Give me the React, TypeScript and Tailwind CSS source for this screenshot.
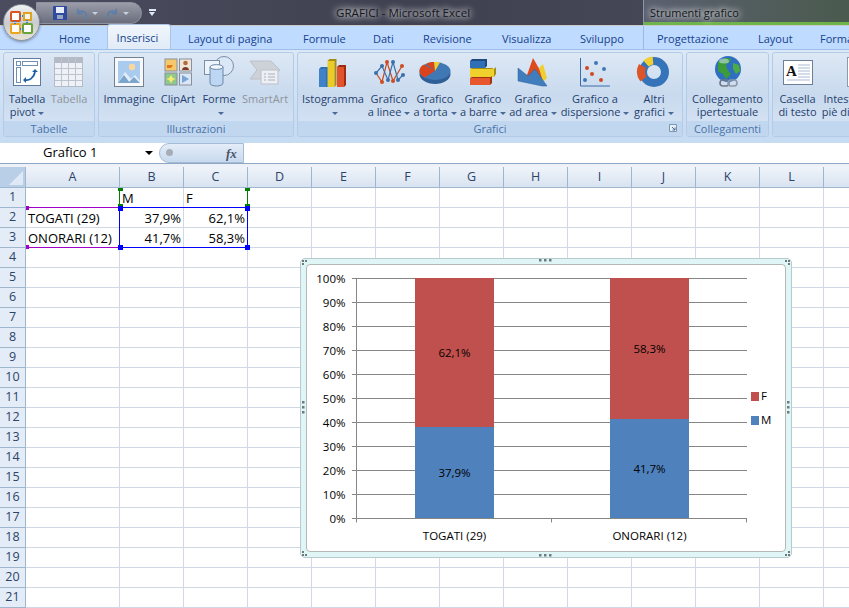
import React from "react";

const Caret = ({ c = "border-t-[#4a6a96]" }: { c?: string }) => (
  <span className={`inline-block w-0 h-0 border-x-[3px] border-t-[3px] border-x-transparent ${c} align-middle ml-[3px]`} />
);

const I = ({ children }: { children: React.ReactNode }) => (
  <svg width="36" height="36" viewBox="0 0 36 36" className="block">{children}</svg>
);

const PivotIcon = () => (
  <I>
    <rect x="4.5" y="4.5" width="27" height="27" fill="#fff" stroke="#5f7c9e" />
    <rect x="7.5" y="7.5" width="4" height="4" fill="#fff" stroke="#6f8fb5" />
    <rect x="13.5" y="7.5" width="15" height="4" fill="#fff" stroke="#6f8fb5" />
    <rect x="7.5" y="13.5" width="4" height="15" fill="#fff" stroke="#6f8fb5" />
    <path d="M16 26c4 1 9-2 10-8" fill="none" stroke="#1f5fa8" strokeWidth="1.8" />
    <path d="M23 18l3-3 3 3zM17 23l-3 3 3 3z" fill="#1f5fa8" />
  </I>
);
const TableIcon = () => (
  <I>
    <rect x="3.5" y="3.5" width="28" height="29" fill="#eef2f8" stroke="#b5bcc6" />
    <rect x="4" y="4" width="27" height="5" fill="#b4bbc6" />
    <path d="M10.5 4v28M17.5 4v28M24.5 4v28M4 14.5h27M4 20.5h27M4 26.5h27" stroke="#bcc3cd" />
  </I>
);
const ImageIcon = () => (
  <I>
    <rect x="3.5" y="3.5" width="29" height="29" fill="#f6f8fb" stroke="#74818f" />
    <rect x="7" y="7" width="22" height="22" fill="#a9cbed" />
    <circle cx="21" cy="13" r="3.2" fill="#fbd7a0" />
    <path d="M7 29l7-11 6 7 4-4 5 6v2z" fill="#e4eef8" />
    <path d="M7 29l6-8 6 8zM17 29l6-6 6 6z" fill="#7da5cc" />
  </I>
);
const ClipIcon = () => (
  <I>
    <rect x="5" y="5" width="12" height="12" fill="#f4c96b" stroke="#8a8f99" />
    <path d="M7 11h6l-2 3H7z" fill="#e2761c" />
    <rect x="19.5" y="5" width="12" height="12" fill="#efe6da" stroke="#8a8f99" />
    <circle cx="25.5" cy="9" r="2.3" fill="#b26a3f" />
    <path d="M22 16c0-4 7-4 7 0z" fill="#7b3a2a" />
    <rect x="5" y="19" width="12" height="12" fill="#8fc78d" stroke="#8a8f99" />
    <path d="M11 21l2 3 3 1-3 1-2 3-2-3-3-1 3-1z" fill="#f5ec6f" />
    <rect x="19.5" y="19" width="12" height="12" fill="#d9e7f6" stroke="#8a8f99" />
    <path d="M22 21l7 4-7 4z" fill="#7aa3d6" />
  </I>
);
const ShapesIcon = () => (
  <I>
    <circle cx="23" cy="12" r="9.5" fill="#d9e7f7" stroke="#7b8ea6" />
    <rect x="3.5" y="6.5" width="15" height="14" fill="#eef4fb" stroke="#7b8ea6" />
    <path d="M9 13v16c0 4 13 4 13 0V13z" fill="#bcd6f4" stroke="#6f87a5" />
    <ellipse cx="15.5" cy="13" rx="6.5" ry="2.4" fill="#f1f7fe" stroke="#6f87a5" />
  </I>
);
const SmartIcon = () => (
  <I>
    <path d="M3 7h21l9 9-9 9H3l7-9z" fill="#cdd2d8" stroke="#bcc1c8" />
    <rect x="14" y="16" width="17" height="14" fill="#eceff3" stroke="#bcc1c8" />
    <path d="M17 20h2M21 20h7M17 23h2M21 23h7M17 26h2M21 26h7" stroke="#aab1ba" />
  </I>
);
const ColumnIcon = () => (
  <I>
    <path d="M4 15l2-2h7v20H4z" fill="#2f6fb5" /><path d="M4 15h7v18H4z" fill="#3f82c8" />
    <rect x="12.5" y="7" width="7" height="26" fill="#eacb2a" /><path d="M12.5 7l2-2h7l-2 2zM19.500 7l2-2v26l-2 2z" fill="#a58d12" />
    <rect x="22" y="13" width="7" height="20" fill="#e2522b" /><path d="M22 13l2-2h7l-2 2zM29 13l2-2v20l-2 2z" fill="#9b2e12" />
  </I>
);
const LineIcon = () => (
  <I>
    <path d="M5 19l6 9 5-20 6 19 9-15" fill="none" stroke="#c94a1f" strokeWidth="1.2" />
    <path d="M5 19l6-7 6 14 5-18 5 18 5-5" fill="none" stroke="#3c70ab" strokeWidth="1.2" />
    <g fill="#cf4d22"><circle cx="11" cy="28" r="2" /><circle cx="16" cy="8" r="2" /><circle cx="22" cy="27" r="2" /><circle cx="31" cy="12" r="2" /></g>
    <g fill="#3c70ab"><circle cx="5" cy="19" r="2" /><circle cx="11" cy="12" r="2" /><circle cx="17" cy="26" r="2" /><circle cx="22" cy="8" r="2" /><circle cx="27" cy="26" r="2" /><circle cx="32" cy="21" r="2" /></g>
  </I>
);
const PieIcon = () => (
  <I>
    <ellipse cx="18" cy="20" rx="15.5" ry="10" fill="#2f5f96" />
    <ellipse cx="18" cy="17" rx="15.5" ry="9" fill="#3f78b5" />
    <path d="M18 17L7 10.5C4 12 2.500 14 2.500 17c0 3 2 5 5 6.500z" fill="#d9441c" />
    <path d="M18 17L9 10c2-1.500 5-2 8-2z" fill="#d9441c" />
    <path d="M18 17l-1-9c2 0 4 0 6 .5z" fill="#f0cc2e" />
  </I>
);
const BarIcon = () => (
  <I>
    <path d="M5 7h15v7H5z" fill="#2f6fb5" /><path d="M5 7l2-2h15l-2 2zM20 7l2-2v7l-2 2z" fill="#1d4a80" />
    <path d="M5 15h24v8H5z" fill="#efd02c" /><path d="M29 15l2-2v7l-2 3zM5 15l2-1h22l-2 1z" fill="#a38e14" />
    <path d="M5 24h20v7H5z" fill="#e8562d" /><path d="M25 24l2-2v7l-2 2zM5 24l2-1h20l-2 1z" fill="#a2330f" />
  </I>
);
const AreaIcon = () => (
  <I>
    <path d="M11 24L18 4l8 14 4 8z" fill="#dd4a1d" />
    <path d="M24 14l4-4 4 14-4 4z" fill="#efcf2e" />
    <path d="M3 14v13l24 5 5 0-12-17-7 7z" fill="#3f7dbd" stroke="#2e629b" strokeWidth=".5" />
  </I>
);
const ScatterIcon = () => (
  <I>
    <path d="M3.500 4v28H33" fill="none" stroke="#3a6ea8" />
    <g fill="#3f78b5"><circle cx="19" cy="9" r="2" /><circle cx="8" cy="26" r="2" /><circle cx="27" cy="15" r="2" /></g>
    <g fill="#cf4a22"><circle cx="10" cy="14" r="2" /><circle cx="15" cy="20" r="2" /><circle cx="24" cy="26" r="2" /></g>
  </I>
);
const DonutIcon = () => (
  <I>
    <circle cx="18" cy="18" r="11" fill="none" stroke="#3574b8" strokeWidth="8" />
    <path d="M7.500 25a12 12 0 0 1-1-13" fill="none" stroke="#dc5428" strokeWidth="8" />
    <path d="M10 9.500a12 12 0 0 1 7-3" fill="none" stroke="#f1cf32" strokeWidth="8" />
  </I>
);
const GlobeIcon = () => (
  <I>
    <circle cx="18" cy="15" r="13" fill="#2f6fc0" />
    <path d="M8 8c4-4 10-5 13-3l-2 4-3 1 1 5 4 5-5 5-3-5-5-3z" fill="#3d9b3a" />
    <path d="M23 9l6 2 1 6-4 3-3-5z" fill="#4cab42" />
    <ellipse cx="14" cy="7" rx="5" ry="2.500" fill="#cfe6fb" opacity=".55" />
    <rect x="10" y="26" width="9" height="6" rx="3" fill="none" stroke="#6f7a86" strokeWidth="1.600" />
    <rect x="18" y="26" width="9" height="6" rx="3" fill="none" stroke="#8e99a6" strokeWidth="1.600" />
  </I>
);
const TextBoxIcon = () => (
  <I>
    <rect x="3.500" y="6.500" width="29" height="24" fill="#fff" stroke="#6c7f96" />
    <text x="6" y="22" fontFamily="Liberation Serif, serif" fontSize="15" fontWeight="700" fill="#111">A</text>
    <path d="M18 11h12M18 14h12M18 17h12M18 20h12M18 23h12M7 26h23" stroke="#a9bcd4" />
  </I>
);
const HeaderIcon = () => (
  <I>
    <rect x="20.500" y="3.500" width="16" height="29" fill="#fff" stroke="#8a9ab0" />
  </I>
);

type Btn = { w: number; icon: React.ReactNode; a: string; b?: string; caret?: boolean; off?: boolean; bShift?: boolean };

const RibbonButton = ({ w, icon, a, b, caret, off, bShift }: Btn) => (
  <div className="flex flex-col items-center shrink-0" style={{ width: w }}>
    <div className="h-[38px] flex items-start justify-center w-full">{icon}</div>
    <div className={`leading-[13px] whitespace-nowrap text-center ${off ? "text-[#8f949b]" : "text-[#1f3f6e]"}`}>{a}</div>
    <div className={`leading-[13px] h-[13px] whitespace-nowrap text-center ${bShift ? "pl-[6px]" : ""} ${off ? "text-[#8f949b]" : "text-[#1f3f6e]"}`}>
      {b}
      {caret && <Caret />}
    </div>
  </div>
);

const Group = ({ w, label, pl = 3, launcher, children }: { w: number; label: string; pl?: number; launcher?: boolean; children: React.ReactNode }) => (
  <div className="shrink-0 h-[85px] flex flex-col rounded-[3px] border border-[#b3cbe6] overflow-hidden bg-gradient-to-b from-[#dde8f5] via-[#c9daee] to-[#d7e5f5]" style={{ width: w }}>
    <div className="flex h-[68px] pt-[1px]" style={{ paddingLeft: pl - 1 }}>{children}</div>
    <div className="relative h-[15px] bg-[#c1d7ef] text-[#4a73a8] text-center leading-[15px]">
      {label}
      {launcher && (
        <svg width="9" height="9" viewBox="0 0 9 9" className="absolute right-[4px] top-[3px]">
          <path d="M.5.500h7v7h-7z" fill="#e6eef8" stroke="#7b95b5" />
          <path d="M3 3l3 3M6 3.500V6H3.500" fill="none" stroke="#4f6f98" />
        </svg>
      )}
    </div>
  </div>
);

const cols = ["A", "B", "C", "D", "E", "F", "G", "H", "I", "J", "K", "L", "M"];
const widths = [94, 64, 64, 64, 64, 64, 64, 64, 64, 64, 64, 64, 64];
const data: Record<number, string[]> = {
  1: ["", "M", "F"],
  2: ["TOGATI (29)", "37,9%", "62,1%"],
  3: ["ONORARI (12)", "41,7%", "58,3%"],
};

const Sheet = () => (
  <div className="relative">
    <div className="flex h-[21px]">
      <div className="w-[26px] shrink-0 bg-[#b9cfe8] border-r border-b border-[#9eb6ce] relative">
        <svg width="14" height="14" viewBox="0 0 14 14" className="absolute right-[2px] bottom-[2px]"><path d="M14 0v14H0z" fill="#dfe9f5" /></svg>
      </div>
      {cols.map((c, i) => (
        <div key={c} className="shrink-0 flex items-center justify-center text-[#2b4468] bg-gradient-to-b from-[#f0f4fa] to-[#d8e3f1] border-r border-b border-[#9eb6ce] text-[12.5px]" style={{ width: widths[i] }}>
          {c}
        </div>
      ))}
    </div>
    {Array.from({ length: 21 }, (_, r) => r + 1).map((r) => (
      <div key={r} className="flex h-[20px]">
        <div className="w-[26px] shrink-0 flex items-center justify-center text-[#2b4468] bg-[#e4ecf7] border-r border-b border-[#9eb6ce] text-[12.5px]">{r}</div>
        {widths.map((w, i) => {
          const t = data[r]?.[i] ?? "";
          const right = r > 1 && i > 0;
          return (
            <div key={i} className={`shrink-0 border-r border-b border-[#d0d7e5] leading-[20px] px-[2px] whitespace-nowrap text-[13px] text-black bg-white ${right ? "text-right" : "text-left"}`} style={{ width: w }}>
              {t}
            </div>
          );
        })}
      </div>
    ))}
  </div>
);

const Handle = ({ c, x, y }: { c: string; x: number; y: number }) => (
  <div className={`absolute ${c}`} style={{ left: x, top: y }} />
);

const Dots = ({ v }: { v?: boolean }) => (
  <svg width={v ? 3 : 13} height={v ? 13 : 3} className="block">
    {[0, 1, 2].map((k) => (
      <rect key={k} x={v ? 0 : k * 5} y={v ? k * 5 : 0} width="2.500" height="2.500" fill="#6f7c7c" />
    ))}
  </svg>
);

const Corner = ({ r }: { r: number }) => (
  <svg width="7" height="7" viewBox="0 0 7 7" className="block" style={{ transform: `rotate(${r}deg)` }}>
    <path d="M0 0h2v2H0zM3 0h2v2H3zM0 3h2v2H0z" fill="#6f7c7c" />
  </svg>
);

const Selection = () => (
  <>
    <div className="absolute left-[119px] top-[21px] w-[129px] h-[20px] border-x border-[#008000]" />
    <div className="absolute left-[26px] top-[40px] w-[94px] h-[41px] border-y border-[#a000c8]" />
    <div className="absolute left-[119px] top-[40px] w-[129px] h-[41px] border border-[#0000ff]" />
    <Handle c="bg-[#008000] w-[5px] h-[3px]" x={118} y={21} />
    <Handle c="bg-[#008000] w-[5px] h-[3px]" x={245} y={21} />
    <Handle c="bg-[#008000] w-[5px] h-[3px]" x={245} y={37} />
    <Handle c="bg-[#008000] w-[5px] h-[3px]" x={118} y={37} />
    <Handle c="bg-[#a000c8] w-[3px] h-[4px]" x={26} y={39} />
    <Handle c="bg-[#a000c8] w-[3px] h-[4px]" x={26} y={78} />
    <Handle c="bg-[#0000ff] w-[5px] h-[5px]" x={118} y={39} />
    <Handle c="bg-[#0000ff] w-[5px] h-[5px]" x={245} y={39} />
    <Handle c="bg-[#0000ff] w-[5px] h-[5px]" x={118} y={78} />
    <Handle c="bg-[#0000ff] w-[5px] h-[5px]" x={245} y={78} />
  </>
);

const Chart = () => {
  const ys = Array.from({ length: 11 }, (_, i) => 253.5 - i * 24);
  const bars = [
    { x: 108, f: "62,1%", m: "37,9%", top: 162, cat: "TOGATI (29)", cx: 147.5 },
    { x: 303, f: "58,3%", m: "41,7%", top: 154, cat: "ONORARI (12)", cx: 342.5 },
  ];
  return (
    <div className="absolute left-[300px] top-[91px] w-[492px] h-[300px] rounded-[5px] border border-[#b6cccc] bg-[#dff5f6] p-[5px]">
      <div className="w-full h-full bg-white border border-[#b4b8b8] rounded-[4px]">
        <svg width="480" height="287" viewBox="0 0 480 287" className="block" fontFamily="Open Sans, sans-serif" fontSize="11.5">
          <g stroke="#868686">
            {ys.map((y) => (
              <path key={y} d={`M45 ${y}H440`} />
            ))}
            <path d="M49.500 13v241M49.500 253v4.500M244.500 253v4.500M439.500 253v4.500" />
          </g>
          {ys.map((y, i) => (
            <text key={i} x="38.500" y={y + 4} textAnchor="end" fill="#000">{`${i * 10}%`}</text>
          ))}
          {bars.map((b) => (
            <g key={b.x}>
              <rect x={b.x} y="13" width="79" height={b.top - 13} fill="#c0504d" />
              <rect x={b.x} y={b.top} width="79" height={253 - b.top} fill="#4f81bd" />
              <text x={b.cx} y={(13 + b.top) / 2 + 4} textAnchor="middle" fill="#000">{b.f}</text>
              <text x={b.cx} y={(253 + b.top) / 2 + 4} textAnchor="middle" fill="#000">{b.m}</text>
              <text x={b.cx} y="275" textAnchor="middle" fill="#000">{b.cat}</text>
            </g>
          ))}
          <rect x="444" y="127" width="8" height="9" fill="#c0504d" />
          <text x="454" y="135" fill="#000">F</text>
          <rect x="444" y="151" width="8" height="9" fill="#4f81bd" />
          <text x="454" y="159" fill="#000">M</text>
        </svg>
      </div>
      <div className="absolute left-[238px] top-[0px]"><Dots /></div>
      <div className="absolute left-[238px] bottom-[0px]"><Dots /></div>
      <div className="absolute left-[1px] top-[142px]"><Dots v /></div>
      <div className="absolute right-[1px] top-[142px]"><Dots v /></div>
      <div className="absolute left-[1px] top-[1px]"><Corner r={0} /></div>
      <div className="absolute right-[1px] top-[1px]"><Corner r={90} /></div>
      <div className="absolute right-[1px] bottom-[1px]"><Corner r={180} /></div>
      <div className="absolute left-[1px] bottom-[1px]"><Corner r={270} /></div>
    </div>
  );
};

export default function App() {
  return (
    <div className="relative w-[849px] h-[608px] overflow-hidden bg-white text-[11px] font-['Open_Sans',sans-serif]">
      {/* Title bar */}
      <div className="h-[25px] flex bg-gradient-to-r from-[#4b4c5e] via-[#3f4150] to-[#4a4c5b]">
        <div className="w-[336px] shrink-0" />
        <div className="w-[307px] shrink-0 text-[11.6px] leading-[26px] text-[#15171c] [text-shadow:0_0_6px_#ffffff,0_0_8px_#ffffff] whitespace-nowrap">GRAFICI - Microsoft Excel</div>
        <div className="flex-1 border-l border-[#8d97a6] border-b-[3px] border-b-[#6db34a] bg-gradient-to-r from-[#5b6070] to-[#4a5a4e] pl-[6px] text-[11px] leading-[26px] text-[#14171a] [text-shadow:0_0_6px_#ffffff,0_0_8px_#ffffff]">Strumenti grafico</div>
      </div>
      {/* QAT */}
      <div className="absolute z-10 left-[36px] top-[2px] w-[106px] h-[22px] rounded-r-[11px] border border-[#8b93a2] bg-gradient-to-b from-[#9a9da8] to-[#6a6d7c] flex items-center pl-[15px]">
        <svg width="16" height="16" viewBox="0 0 16 16"><rect x="1" y="1" width="14" height="14" rx="1" fill="#2f4a9e" /><rect x="4" y="2" width="8" height="6" fill="#e6edf8" /><rect x="5" y="10" width="6" height="4" fill="#9aa6c0" /></svg>
        <svg width="13" height="13" viewBox="0 0 14 14" className="ml-[7px]"><path d="M3 2v5h5M3 7c2-4 9-3 9 2 0 2-1 3-2 4" fill="none" stroke="#5f7fa8" strokeWidth="2" /></svg>
        <span className="ml-[4px] w-0 h-0 border-x-[3px] border-t-[3px] border-x-transparent border-t-[#c8d0dc]" />
        <svg width="13" height="13" viewBox="0 0 14 14" className="ml-[8px]"><path d="M11 2v5H6M11 7C9 3 2 4 2 9c0 2 1 3 2 4" fill="none" stroke="#5f7fa8" strokeWidth="2" /></svg>
        <span className="ml-[4px] w-0 h-0 border-x-[3px] border-t-[3px] border-x-transparent border-t-[#c8d0dc]" />
      </div>
      <div className="absolute z-10 left-[149px] top-[9px] w-[7px] h-[8px]">
        <div className="h-[2px] bg-[#dfe8f5] mb-[1px]" />
        <div className="w-0 h-0 border-x-[3.500px] border-t-[4px] border-x-transparent border-t-[#dfe8f5]" />
      </div>
      {/* Orb */}
      <div className="absolute z-20 left-[3px] top-[4px] w-[37px] h-[37px] rounded-full border border-[#8a8f96] bg-gradient-to-b from-[#f1f2f3] via-[#c9ccd0] to-[#e8e3d8] flex items-center justify-center shadow-[0_1px_3px_rgba(60,80,110,.6)]">
        <svg width="23" height="23" viewBox="0 0 23 23">
          <rect x="1" y="1" width="9" height="9" rx="1" fill="#fff" stroke="#d9541e" strokeWidth="2" />
          <rect x="14" y="2" width="7" height="7" fill="#f3f3ef" stroke="#e0a31f" strokeWidth="2" />
          <rect x="1" y="13" width="9" height="9" rx="1" fill="#fff" stroke="#eda51c" strokeWidth="2" />
          <rect x="13" y="13" width="9" height="9" rx="1" fill="#fff" stroke="#6aa338" strokeWidth="2" />
          <path d="M10 5h4M10 18h3M5 10v3M17 9v4" stroke="#3a7fc0" strokeWidth="2" strokeDasharray="1 1" />
        </svg>
      </div>
      {/* Tabs */}
      <div className="h-[25px] flex bg-[#bfdbff] border-t border-[#c9c9c9] border-b border-b-[#9fbfe6] text-[#15428b] text-[11px] leading-[25px]">
        <div className="w-[59px] shrink-0" />
        <span className="w-[48px] shrink-0">Home</span>
        <span className="w-[64px] shrink-0 h-[25px] -mt-[2px] rounded-t-[3px] border border-b-0 border-[#a9c4e4] bg-gradient-to-b from-[#f1f6fc] to-[#e0ebf7] text-center leading-[26px] pr-[3px] z-10">Inserisci</span>
        <span className="w-[17px] shrink-0" />
        <span className="w-[115px] shrink-0">Layout di pagina</span>
        <span className="w-[70px] shrink-0">Formule</span>
        <span className="w-[50px] shrink-0">Dati</span>
        <span className="w-[79px] shrink-0">Revisione</span>
        <span className="w-[78px] shrink-0">Visualizza</span>
        <span className="w-[63px] shrink-0">Sviluppo</span>
        <span className="w-[14px] shrink-0 border-l border-[#9db8d8] h-[24px]" />
        <span className="w-[101px] shrink-0">Progettazione</span>
        <span className="w-[62px] shrink-0">Layout</span>
        <span className="shrink-0">Forma</span>
      </div>
      {/* Ribbon */}
      <div className="h-[93px] overflow-hidden bg-gradient-to-b from-[#dbe8f7] to-[#c6daf2] pt-[2px] pl-[3px] flex items-start gap-[3px] border-b-[5px] border-b-[#c5dcf2]">
        <Group w={92} label="Tabelle">
          <RibbonButton w={42} icon={<PivotIcon />} a="Tabella" b="pivot" caret />
          <RibbonButton w={42} icon={<TableIcon />} a="Tabella" off />
        </Group>
        <Group w={196} label="Illustrazioni">
          <RibbonButton w={56} icon={<ImageIcon />} a="Immagine" />
          <RibbonButton w={42} icon={<ClipIcon />} a="ClipArt" />
          <RibbonButton w={40} icon={<ShapesIcon />} a="Forme" caret />
          <RibbonButton w={52} icon={<SmartIcon />} a="SmartArt" off />
        </Group>
        <Group w={386} label="Grafici" launcher>
          <RibbonButton w={66} icon={<ColumnIcon />} a="Istogramma" caret />
          <RibbonButton w={46} icon={<LineIcon />} a="Grafico" b="a linee" caret />
          <RibbonButton w={46} icon={<PieIcon />} a="Grafico" b="a torta" caret />
          <RibbonButton w={50} icon={<BarIcon />} a="Grafico" b="a barre" caret />
          <RibbonButton w={50} icon={<AreaIcon />} a="Grafico" b="ad area" caret />
          <RibbonButton w={74} icon={<ScatterIcon />} a="Grafico a" b="dispersione" caret />
          <RibbonButton w={44} icon={<DonutIcon />} a="Altri" b="grafici" caret />
        </Group>
        <Group w={83} label="Collegamenti">
          <RibbonButton w={77} icon={<GlobeIcon />} a="Collegamento" b="ipertestuale" />
        </Group>
        <Group w={100} label="">
          <RibbonButton w={45} icon={<TextBoxIcon />} a="Casella" b="di testo" />
          <RibbonButton w={50} icon={<HeaderIcon />} a="Intestaz." b="piè di pag." bShift />
        </Group>
      </div>
      {/* Formula bar */}
      <div className="h-[21px] bg-white flex border-b border-[#8ea7c4]">
        <div className="w-[159px] shrink-0 flex items-center text-[13px] text-black pl-[43px] relative">
          Grafico 1
          <span className="absolute left-[145px] top-[8px] w-0 h-0 border-x-[4px] border-t-[4px] border-x-transparent border-t-black" />
        </div>
        <div className="w-[85px] shrink-0 relative h-[20px] rounded-l-[10px] border border-[#a5bcd6] bg-gradient-to-b from-[#e4edf8] to-[#c8d9ee]">
          <span className="absolute left-[6px] top-[5px] w-[7px] h-[7px] rounded-full bg-[#a6adb6]" />
          <span className="absolute left-[66px] top-[0px] text-[13px] font-['Liberation_Serif',serif] italic font-bold text-[#4a5568]">fx</span>
        </div>
      </div>
      <div className="h-[3px] bg-[#eef2f8]" />
      <div className="relative">
        <Sheet />
        <Selection />
        <Chart />
      </div>
    </div>
  );
}
